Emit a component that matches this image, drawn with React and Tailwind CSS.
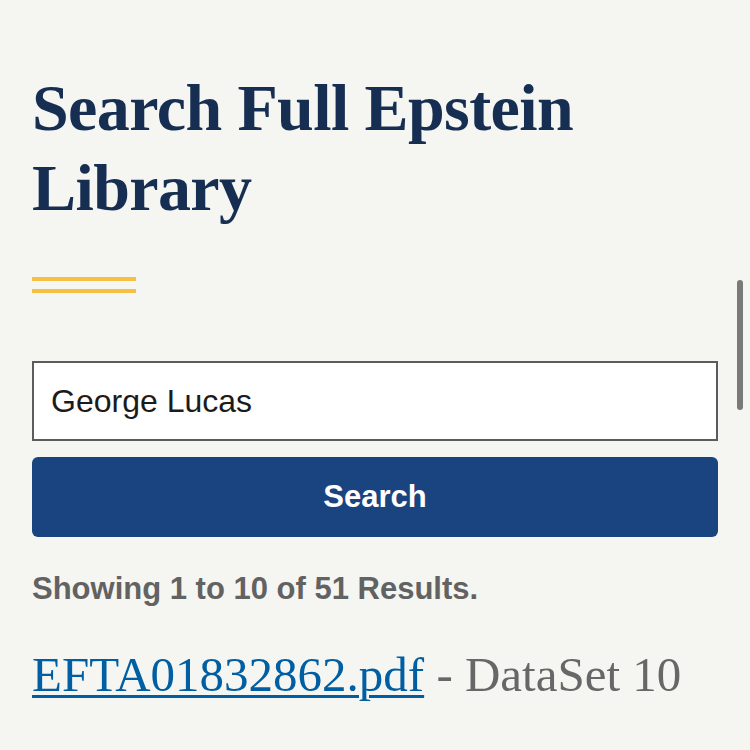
export default function App() {
  return (
    <div className="relative w-[750px] h-[750px] overflow-hidden bg-[#f5f5f1]">
      <div className="px-[32px] pt-[68px]">
        <h1 className="text-[#162e51] font-bold text-[66px] leading-[80px] tracking-[-0.6px]" style={{ fontFamily: '"Liberation Serif", serif' }}>
          Search Full Epstein Library
        </h1>
        <div className="mt-[49px] flex flex-col gap-[8px] w-[104px]">
          <div className="h-[4px] bg-[#f6c143]" />
          <div className="h-[4px] bg-[#f6c143]" />
        </div>
        <div className="mt-[68px] h-[80px] border-2 border-[#5c5c5c] bg-white flex items-center px-[17px]">
          <span className="text-[32px] text-[#1b1b1b]" style={{ fontFamily: '"Liberation Sans", sans-serif' }}>George Lucas</span>
        </div>
        <div className="mt-[16px] h-[80px] rounded-[6px] bg-[#1a4480] flex items-center justify-center">
          <span className="text-white font-bold text-[31px]" style={{ fontFamily: '"Liberation Sans", sans-serif' }}>Search</span>
        </div>
        <div className="mt-[32px] text-[#626262] font-bold text-[31px] leading-[40px]" style={{ fontFamily: '"Liberation Sans", sans-serif' }}>
          Showing 1 to 10 of 51 Results.
        </div>
        <div className="mt-[38px] text-[49px] leading-[56px]" style={{ fontFamily: '"Liberation Serif", serif' }}>
          <a className="text-[#005ea2] underline decoration-[3px] underline-offset-[4px]" href="#">EFTA01832862.pdf</a>
          <span className="text-[#676767]"> - DataSet 10</span>
        </div>
      </div>
      <div className="absolute left-[737px] top-[280px] w-[6px] h-[130px] rounded-full bg-[#7a7a7a]" />
    </div>
  );
}
